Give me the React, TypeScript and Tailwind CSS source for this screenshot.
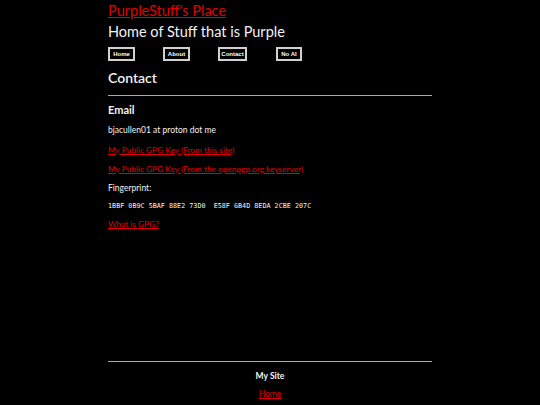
import React from "react";

const body = { fontFamily: 'Lato, "DejaVu Sans", sans-serif' };

export default function App() {
  const navs = [
    { n: "Home", w: "w-[27px] mr-[28px]" },
    { n: "About", w: "w-[27px] mr-[28px]" },
    { n: "Contact", w: "w-[29px] mr-[29px]" },
    { n: "No AI", w: "w-[26px]" },
  ];
  return (
    <div className="min-h-[405px] w-full bg-black text-[#f2f2f2]" style={body}>
      <div className="mx-auto flex min-h-[405px] w-[324px] flex-col">
        <header className="pt-[1px]">
          <a href="#" className="block text-[14.5px] leading-[20px] text-[#e00000] underline">PurpleStuff's Place</a>
          <div className="mt-[2px] text-[14.5px] leading-[18px] text-[#f2f2f2]">Home of Stuff that is Purple</div>
          <nav className="mt-[6px] flex h-[14px] items-center">
            {navs.map((x) => (
              <div
                key={x.n}
                className={
                  "flex h-[14px] items-center justify-center whitespace-nowrap border-2 border-[#d0d0d0] text-[6px] font-bold text-white " + x.w
                }
                style={{ fontFamily: '"Liberation Sans", Arial, sans-serif' }}
              >
                {x.n}
              </div>
            ))}
          </nav>
        </header>
        <main className="flex-1">
          <h2 className="mt-[7px] text-[14px] font-semibold leading-[20px]">Contact</h2>
          <hr className="mt-[7px] border-t border-[#aaaaaa]" />
          <h3 className="mt-[7px] text-[11px] font-bold leading-[14px]">Email</h3>
          <p className="mt-[8px] text-[8.5px] leading-[11px]">bjacullen01 at proton dot me</p>
          <p className="mt-[8.5px] text-[8.3px] leading-[11px]"><a href="#" className="text-[#e00000] underline">My Public GPG Key (From this site)</a></p>
          <p className="mt-[8px] text-[8.3px] leading-[11px]"><a href="#" className="text-[#e00000] underline">My Public GPG Key (From the openpgp.org keyserver)</a></p>
          <p className="mt-[8px] text-[8.5px] leading-[11px]">Fingerprint:</p>
          <p className="mt-[7px] whitespace-pre text-[6.75px] leading-[11px]" style={{ fontFamily: '"DejaVu Sans Mono", monospace' }}>1BBF 0B9C 5BAF 88E2 73D0  E58F 6B4D 8EDA 2CBE 207C</p>
          <p className="mt-[7.5px] text-[8.3px] leading-[11px]"><a href="#" className="text-[#e00000] underline">What is GPG?</a></p>
        </main>
        <footer className="pb-[5px]">
          <hr className="border-t border-[#aaaaaa]" />
          <div className="mt-[9px] text-center text-[8.5px] font-bold leading-[11px]">My Site</div>
          <div className="mt-[7px] text-center text-[8.5px] leading-[11px]"><a href="#" className="text-[#e00000] underline">Home</a></div>
        </footer>
      </div>
    </div>
  );
}
